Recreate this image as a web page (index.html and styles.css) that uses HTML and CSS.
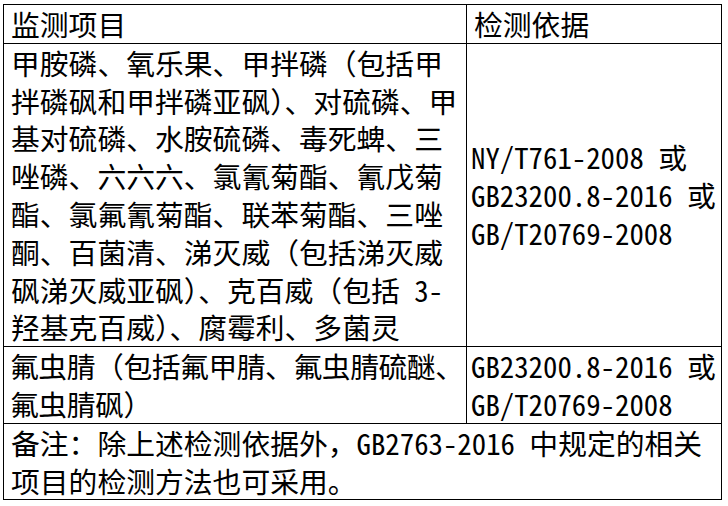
FILE: index.html
```html
<!DOCTYPE html>
<html lang="zh-CN">
<head>
<meta charset="utf-8">
<title>监测项目</title>
<link rel="stylesheet" href="styles.css">
</head>
<body>
<table class="spec">
  <colgroup><col class="c1"><col class="c2"></colgroup>
  <tr>
    <td class="cell">监测项目</td>
    <td class="cell">检测依据</td>
  </tr>
  <tr>
    <td class="cell">甲胺磷、氧乐果、甲拌磷（包括甲<br>拌磷砜和甲拌磷亚砜）、对硫磷、甲<br>基对硫磷、水胺硫磷、毒死蜱、三<br>唑磷、六六六、氯氰菊酯、氰戊菊<br>酯、氯氟氰菊酯、联苯菊酯、三唑<br>酮、百菌清、涕灭威（包括涕灭威<br>砜涕灭威亚砜）、克百威（包括 3-<br>羟基克百威）、腐霉利、多菌灵</td>
    <td class="cell mid">NY/T761-2008 或<br>GB23200.8-2016 或<br>GB/T20769-2008</td>
  </tr>
  <tr>
    <td class="cell tight">氟虫腈（包括氟甲腈、氟虫腈硫醚、<br>氟虫腈砜）</td>
    <td class="cell mid">GB23200.8-2016 或<br>GB/T20769-2008</td>
  </tr>
  <tr>
    <td class="cell" colspan="2">备注：除上述检测依据外，GB2763-2016 中规定的相关<br>项目的检测方法也可采用。</td>
  </tr>
</table>
</body>
</html>
```
FILE: styles.css
```css
html, body {
  margin: 0;
  padding: 0;
  background: #fff;
}
.spec {
  margin: 4px 0 0 3px;
  border-collapse: collapse;
  table-layout: fixed;
  width: 718px;
  font-family: "Noto Sans Mono CJK SC", "Noto Sans CJK SC", sans-serif;
  font-size: 28.8px;
  line-height: 37.8px;
  color: #000;
}
.c1 { width: 463px; }
.c2 { width: 255px; }
.cell {
  border: 1px solid #000;
  padding: 0 0 0 7px;
  vertical-align: top;
  white-space: nowrap;
  overflow: hidden;
}
.tight {
  padding-left: 6px;
  letter-spacing: -0.45px;
}
.mid {
  vertical-align: middle;
  padding-left: 4px;
}
```
